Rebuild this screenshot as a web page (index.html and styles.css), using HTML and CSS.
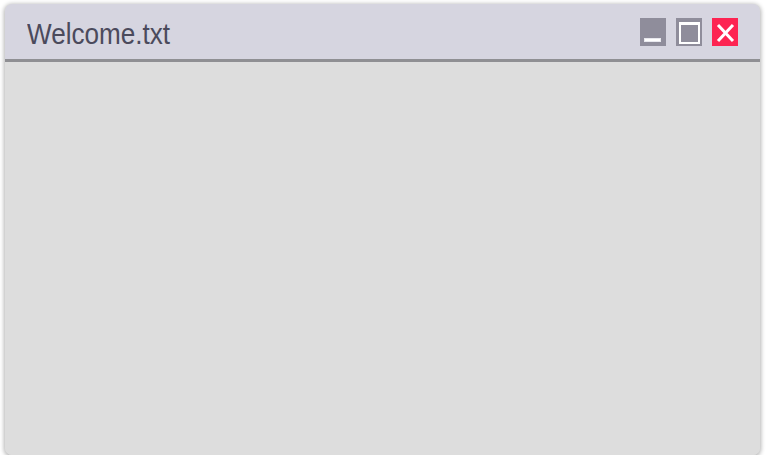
FILE: index.html
```html
<!DOCTYPE html>
<html>
<head>
<meta charset="utf-8">
<link rel="stylesheet" href="styles.css">
</head>
<body>
<div class="window">
  <div class="titlebar">
    <span class="title">Welcome.txt</span>
    <div class="controls">
      <div class="btn btn-min">
        <svg width="26" height="28" viewBox="0 0 26 28" shape-rendering="crispEdges"><rect x="4" y="20" width="17" height="4" fill="#e8e8ee"/><rect x="5" y="21" width="15" height="2" fill="#ffffff"/></svg>
      </div>
      <div class="btn btn-max">
        <svg width="26" height="28" viewBox="0 0 26 28" shape-rendering="crispEdges"><rect x="3" y="4" width="21" height="3" fill="#ffffff"/><rect x="3" y="5" width="2" height="21" fill="#ffffff"/><rect x="22" y="5" width="2" height="21" fill="#ffffff"/><rect x="3" y="24" width="21" height="2" fill="#ffffff"/></svg>
      </div>
      <div class="btn btn-close">
        <svg width="26" height="28" viewBox="0 0 26 28"><path d="M6 7 L21 23 M21 7 L6 23" stroke="#ffffff" stroke-width="3" fill="none"/></svg>
      </div>
    </div>
  </div>
  <div class="content"></div>
</div>
</body>
</html>
```
FILE: styles.css
```css
html, body {
  margin: 0;
  padding: 0;
  background: #ffffff;
}
body {
  padding: 4px 0 0 5px;
}
.window {
  width: 755px;
  height: 451px;
  border-radius: 7px;
  overflow: hidden;
  background: #dddddd;
  box-shadow: 0 1px 4px 1px rgba(0,0,0,0.3);
  display: flex;
  flex-direction: column;
}
.titlebar {
  height: 55px;
  background: #d6d5e0;
  border-bottom: 3px solid #8f8f93;
  display: flex;
  align-items: flex-start;
  justify-content: space-between;
  padding: 0 22px 0 22px;
  flex: none;
}
.title {
  display: inline-block;
  font-family: "Liberation Sans", Arial, sans-serif;
  font-size: 30px;
  letter-spacing: 0;
  color: #4b4a5c;
  margin-top: 13px;
  transform: scaleX(0.87);
  transform-origin: left center;
  -webkit-font-smoothing: none;
}
.controls {
  display: flex;
  gap: 10px;
  margin-top: 14px;
}
.btn {
  width: 26px;
  height: 28px;
  display: flex;
}
.btn-min, .btn-max {
  background: #8f8d9b;
}
.btn-close {
  background: #fd2452;
}
.content {
  flex: 1;
  background: #dddddd;
}
```
